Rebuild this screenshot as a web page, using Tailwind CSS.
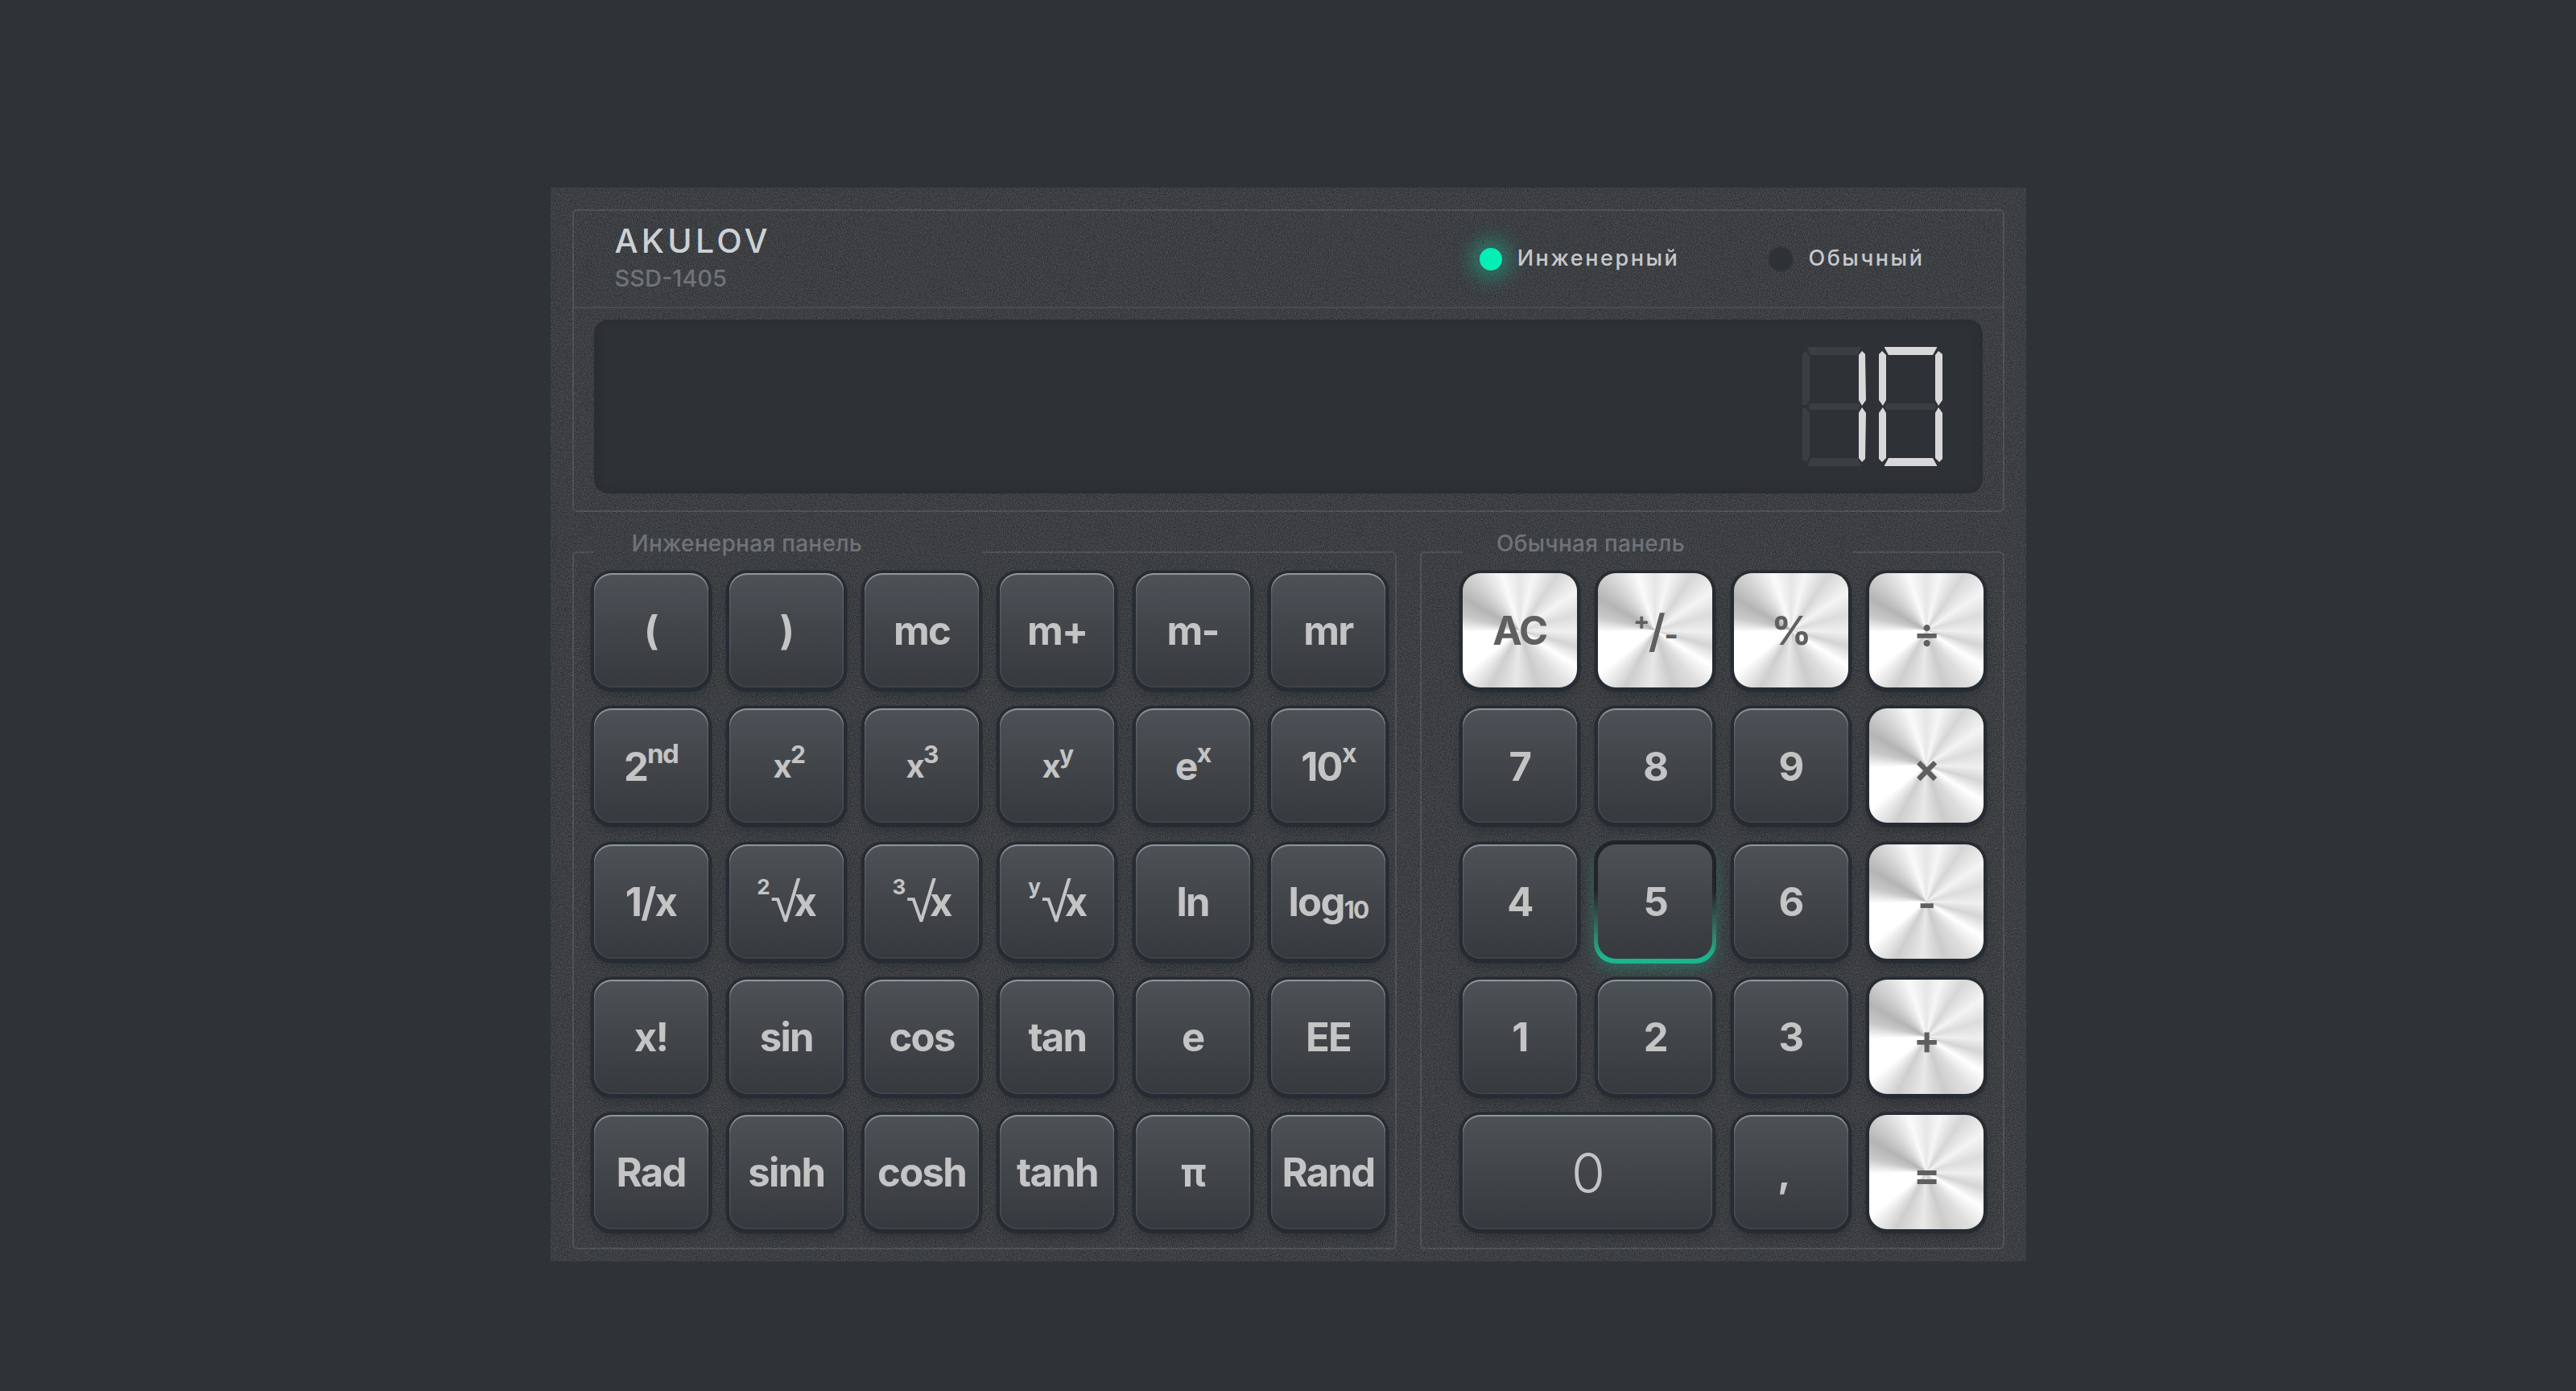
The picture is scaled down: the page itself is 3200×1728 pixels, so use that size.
<!DOCTYPE html>
<html lang="ru">
<head>
  <meta charset="UTF-8">
  <title>AKULOV SSD-1405</title>
  <script src="https://cdn.jsdelivr.net/npm/@tailwindcss/browser@4"></script>
</head>
<body class="bg-[#2e3338] font-[Inter,'Noto_Sans',sans-serif] min-h-screen">
  <div class="w-[1833px] h-[1334px] mx-auto translate-y-[233px] relative bg-[#33363a] px-[27px] pt-[27px]">
    <!-- grain -->
    <svg class="absolute inset-0 z-10 w-full h-full pointer-events-none opacity-[0.13]">
      <filter id="grain" color-interpolation-filters="sRGB"><feTurbulence type="fractalNoise" baseFrequency="0.8" numOctaves="2" seed="4"/><feColorMatrix type="matrix" values="2 0 0 0 -0.5 2 0 0 0 -0.5 2 0 0 0 -0.5 0 0 0 0 1"/></filter>
      <rect width="100%" height="100%" filter="url(#grain)"/>
    </svg>

    <!-- Header + display -->
    <div class="relative border-2 border-[#484c4f] rounded-md h-[376px]">
      <div class="h-[121px] border-b-2 border-[#484c4f] flex items-center justify-between relative z-20 pl-[51px] pr-[97px]">
        <div>
          <div class="text-[41px] leading-[48px] -mt-[6px] font-medium tracking-[0.105em] text-[#cdd0d3]">AKULOV</div>
          <div class="text-[29px] leading-[34px] font-medium text-[#6f7377] mt-[6px]">SSD-1405</div>
        </div>
        <div class="flex items-center text-[27px] font-medium tracking-[0.095em] text-[#c6c8ca]">
          <span class="w-[32px] h-[32px] rounded-full bg-[#00f0b5] border-2 border-[#3f5c58] shadow-[0_0_24px_8px_rgba(0,240,181,0.35)]"></span>
          <span class="ml-[17px]">Инженерный</span>
          <span class="w-[32px] h-[32px] rounded-full bg-[#2e3237] border-2 border-[#34383c] ml-[110px]"></span>
          <span class="ml-[18px]">Обычный</span>
        </div>
      </div>
      <div class="relative z-20 mt-[14px] mx-[25px] h-[216px] rounded-[18px] bg-[#2e3237] shadow-[inset_0_0_14px_rgba(0,0,0,0.16)] flex justify-end pt-[34px] pr-[50px] gap-[16px]">
        <!-- 7-seg digit: 1 -->
        <svg class="w-[79px] h-[148px]" viewBox="0 0 79 148">
          <g fill="#3a3f44">
            <polygon points="6,0 73,0 69,10 10,10"/>
            <polygon points="10,70 69,70 72,74 69,78 10,78 7,74"/>
            <polygon points="10,138 69,138 73,148 6,148"/>
            <polygon points="0,8 5,5 9,12 9,66 5,72 0,72"/>
            <polygon points="0,76 5,76 9,82 9,136 5,143 0,140"/>
          </g>
          <g fill="#d8d8d8">
            <polygon points="74,5 78,9 79,66 74,73 70,66 70,10"/>
            <polygon points="74,75 79,82 78,139 74,143 70,138 70,82"/>
          </g>
        </svg>
        <!-- 7-seg digit: 0 -->
        <svg class="w-[79px] h-[148px]" viewBox="0 0 79 148">
          <polygon fill="#3a3f44" points="10,70 69,70 72,74 69,78 10,78 7,74"/>
          <g fill="#d8d8d8">
            <polygon points="7,0 72,0 72,1 67,10 12,10 7,1"/>
            <polygon points="12,138 67,138 72,147 72,148 7,148 7,147"/>
            <polygon points="4,5 9,10 9,66 5,73 0,66 0,9"/>
            <polygon points="5,75 9,82 9,138 4,143 0,139 0,82"/>
            <polygon points="74,5 79,9 79,66 74,73 70,66 70,10"/>
            <polygon points="74,75 79,82 79,139 75,143 70,138 70,82"/>
          </g>
        </svg>
      </div>
    </div>

    <!-- Key panels -->
    <div class="flex gap-[29px] mt-[28px]">
      <fieldset class="w-[1025px] h-[888px] border-2 border-[#484c4f] rounded-md">
        <legend class="ml-[24px] w-[483px] h-[44px] pl-[48px] text-[28px] tracking-[0.01em] leading-[22px] font-medium text-[#6f7377] relative z-20">Инженерная панель</legend>
        <div class="relative z-20 mt-[4px] ml-[25px] grid grid-cols-[repeat(6,142px)] auto-rows-[142px] gap-[26.3px] text-[49px] font-bold tracking-[-0.035em] text-[#c4c4c4] [&>button]:flex [&>button]:items-center [&>button]:justify-center [&>button]:pt-[2px] [&>button]:rounded-[22px] [&>button]:bg-linear-to-b [&>button]:from-[#4d5257] [&>button]:to-[#36393d] [&>button]:shadow-[0_1px_0_4.5px_#262c33,0_9px_14px_rgba(0,0,0,0.22),inset_0_2px_1px_rgba(255,255,255,0.38),inset_0_0_0_1.5px_rgba(255,255,255,0.07)]">
          <button>(</button><button>)</button><button>mc</button><button>m+</button><button>m-</button><button>mr</button>
          <button>2<sup class="text-[33px] -top-[0.5em]">nd</sup></button>
          <button class="pl-[6px]"><span class="text-[40px]">x</span><sup class="text-[30px] -top-[0.5em]">2</sup></button>
          <button><span class="text-[40px]">x</span><sup class="text-[30px] -top-[0.5em]">3</sup></button>
          <button><span class="text-[40px]">x</span><sup class="text-[30px] -top-[0.5em]">y</sup></button>
          <button><span class="text-[48px]">e</span><sup class="text-[32px] -top-[0.5em]">x</sup></button>
          <button>10<sup class="text-[32px] -top-[0.5em]">x</sup></button>
          <button>1/x</button>
          <button><sup class="text-[26px] -top-[0.7em]">2</sup><span class="text-[68px] font-['Liberation_Sans',sans-serif] font-normal leading-none mx-[2px]">√</span><span class="-ml-[8px]">x</span></button>
          <button><sup class="text-[26px] -top-[0.7em]">3</sup><span class="text-[68px] font-['Liberation_Sans',sans-serif] font-normal leading-none mx-[2px]">√</span><span class="-ml-[8px]">x</span></button>
          <button><sup class="text-[26px] -top-[0.7em]">y</sup><span class="text-[68px] font-['Liberation_Sans',sans-serif] font-normal leading-none mx-[2px]">√</span><span class="-ml-[8px]">x</span></button>
          <button>ln</button>
          <button>log<sub class="text-[30px] -bottom-[0.3em]">10</sub></button>
          <button>x!</button><button>sin</button><button>cos</button><button>tan</button><button>e</button><button>EE</button>
          <button>Rad</button><button>sinh</button><button>cosh</button><button>tanh</button><button>π</button><button>Rand</button>
        </div>
      </fieldset>

      <fieldset class="w-[726px] h-[888px] border-2 border-[#484c4f] rounded-md">
        <legend class="ml-[51px] w-[484px] h-[44px] pl-[42px] text-[28px] tracking-[0.01em] leading-[22px] font-medium text-[#6f7377] relative z-20">Обычная панель</legend>
        <div class="relative z-20 mt-[4px] ml-[51px] grid grid-cols-[repeat(4,142px)] auto-rows-[142px] gap-[26.3px] text-[49px] font-bold tracking-[-0.035em] text-[#c4c4c4] [&>button]:flex [&>button]:items-center [&>button]:justify-center [&>button]:rounded-[22px] [&>.key]:pt-[2px] [&>.key]:bg-linear-to-b [&>.key]:from-[#4d5257] [&>.key]:to-[#36393d] [&>.key]:shadow-[0_1px_0_4.5px_#262c33,0_9px_14px_rgba(0,0,0,0.22),inset_0_2px_1px_rgba(255,255,255,0.38),inset_0_0_0_1.5px_rgba(255,255,255,0.07)] [&>.metal]:text-[#5f5f5f] [&>.metal]:shadow-[0_1px_0_4.5px_#262c33,0_9px_14px_rgba(0,0,0,0.22)] [&>.metal]:bg-[conic-gradient(#e6e6e6_0deg,#f6f6f6_14deg,#d6d6d6_34deg,#f4f4f4_56deg,#dcdcdc_74deg,#efefef_92deg,#d4d4d4_106deg,#fff_122deg,#dedede_142deg,#cccccc_162deg,#e8e8e8_184deg,#cecece_208deg,#fff_232deg,#fff_268deg,#c8c8c8_284deg,#b4b4b4_300deg,#d8d8d8_322deg,#fafafa_342deg,#e6e6e6_360deg)]">
          <button class="metal pt-[2px]">AC</button>
          <button class="metal pt-[2px]"><sup class="text-[30px] -top-[0.45em]">+</sup><span class="text-[56px] font-semibold">/</span><sub class="text-[38px] -bottom-[0.1em]">-</sub></button>
          <button class="metal pt-[2px]">%</button>
          <button class="metal pt-[7px]">÷</button>
          <button class="key">7</button><button class="key">8</button><button class="key">9</button>
          <button class="metal pt-[7px]">×</button>
          <button class="key">4</button>
          <button class="key relative before:absolute before:-inset-x-[5px] before:-top-[5px] before:-bottom-[6px] before:-z-10 before:rounded-[26px] before:bg-linear-to-b before:from-[#222427] before:from-40% before:to-[#1db48e] before:to-95% before:shadow-[0_8px_18px_rgba(29,180,142,0.32)] shadow-none!">5</button>
          <button class="key">6</button>
          <button class="metal pt-[7px]">-</button>
          <button class="key">1</button><button class="key">2</button><button class="key">3</button>
          <button class="metal pt-[7px]">+</button>
          <button class="key col-span-2 text-[68px] font-light">0</button>
          <button class="key pr-[18px]">,</button>
          <button class="metal pt-[7px]">=</button>
        </div>
      </fieldset>
    </div>
  </div>
</body>
</html>
